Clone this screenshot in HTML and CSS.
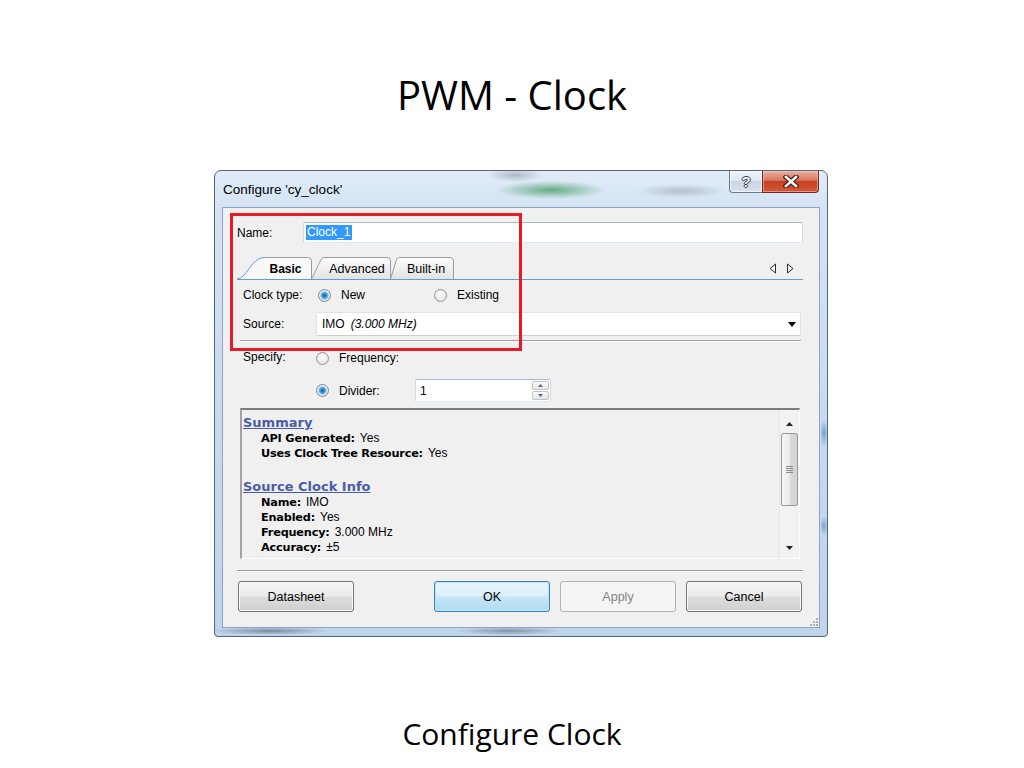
FILE: index.html
```html
<!DOCTYPE html>
<html>
<head>
<meta charset="utf-8">
<title>PWM - Clock</title>
<link rel="stylesheet" href="styles.css">
</head>
<body>
<div class="slide">
  <h1 class="title">PWM - Clock</h1>
  <div class="dialog">
    <div class="titlebar">
      <span class="wtitle">Configure 'cy_clock'</span>
      <div class="capbtns">
        <div class="capbtn help"><span class="qmark">?</span></div>
        <div class="capbtn close">
          <svg width="16" height="13" viewBox="0 0 16 13"><path d="M3 2 L13 11 M13 2 L3 11" stroke="#4a1d15" stroke-width="5" stroke-linecap="square"/><path d="M3 2 L13 11 M13 2 L3 11" stroke="#ffffff" stroke-width="2.6" stroke-linecap="square"/></svg>
        </div>
      </div>
    </div>
    <div class="client">
      <div class="name-row">
        <span class="name-lbl">Name:</span>
        <div class="textbox name-box"><span class="sel">Clock_1</span></div>
      </div>
      <div class="tabstrip">
        <div class="tabs">
          <span class="tab t1">Basic</span>
          <span class="tab t2">Advanced</span>
          <span class="tab t3">Built-in</span>
        </div>
        <svg class="navarrows" width="25" height="11" viewBox="0 0 25 11"><path d="M6.5 1 L1 5.5 L6.5 10 Z" fill="#f4f4f4" stroke="#2b2b2b"/><path d="M18.5 1 L24 5.5 L18.5 10 Z" fill="#f4f4f4" stroke="#2b2b2b"/></svg>
      </div>
      <div class="form">
        <div class="frow r-type">
          <span class="flbl">Clock type:</span>
          <span class="radio on r-new"></span><span class="rtxt w-new">New</span>
          <span class="radio"></span><span class="rtxt">Existing</span>
        </div>
        <div class="frow r-src">
          <span class="flbl">Source:</span>
          <div class="combo">
            <span class="c-main">IMO</span><span class="c-sub">(3.000 MHz)</span>
            <svg class="c-arrow" width="8" height="5" viewBox="0 0 8 5"><path d="M0 0 L8 0 L4 5 Z" fill="#000"/></svg>
          </div>
        </div>
      </div>
      <div class="sep sep1"></div>
      <div class="form">
        <div class="frow r-spec">
          <span class="flbl spec-lbl">Specify:</span>
          <span class="radio"></span><span class="rtxt">Frequency:</span>
        </div>
        <div class="frow r-div">
          <span class="flbl"></span>
          <span class="radio on"></span><span class="rtxt w-div">Divider:</span>
          <div class="textbox spinbox">
            <span class="spin-val">1</span>
            <div class="spin">
              <div class="spin-btn"><svg width="5" height="3" viewBox="0 0 5 3"><path d="M0 3 L2.5 0 L5 3 Z" fill="#4a6a8a"/></svg></div>
              <div class="spin-btn"><svg width="5" height="3" viewBox="0 0 5 3"><path d="M0 0 L2.5 3 L5 0 Z" fill="#4a6a8a"/></svg></div>
            </div>
          </div>
        </div>
      </div>
      <div class="infobox">
        <div class="info">
          <div class="ih">Summary</div>
          <div class="ii"><b>API Generated:</b>Yes</div>
          <div class="ii"><b>Uses Clock Tree Resource:</b>Yes</div>
          <div class="ispace"></div>
          <div class="ih">Source Clock Info</div>
          <div class="ii"><b>Name:</b>IMO</div>
          <div class="ii"><b>Enabled:</b>Yes</div>
          <div class="ii"><b>Frequency:</b>3.000 MHz</div>
          <div class="ii"><b>Accuracy:</b>±5</div>
        </div>
        <div class="sbar">
          <svg class="sb-up" width="7" height="4" viewBox="0 0 7 4"><path d="M0 4 L3.5 0 L7 4 Z" fill="#222"/></svg>
          <div class="thumb">
            <svg width="7" height="7" viewBox="0 0 7 7"><path d="M0 0.5 H7 M0 2.5 H7 M0 4.5 H7 M0 6.5 H7" stroke="#8a8a8a" stroke-width="1"/></svg>
          </div>
          <svg class="sb-down" width="7" height="4" viewBox="0 0 7 4"><path d="M0 0 L7 0 L3.5 4 Z" fill="#222"/></svg>
        </div>
      </div>
      <div class="sep sep2"></div>
      <div class="buttons">
        <div class="btn">Datasheet</div>
        <div class="btn ok">OK</div>
        <div class="btn disabled">Apply</div>
        <div class="btn">Cancel</div>
      </div>
      <svg class="grip" width="10" height="10" viewBox="0 0 10 10"><g fill="#b0b0b0"><rect x="8" y="2" width="2" height="2"/><rect x="5" y="5" width="2" height="2"/><rect x="8" y="5" width="2" height="2"/><rect x="2" y="8" width="2" height="2"/><rect x="5" y="8" width="2" height="2"/><rect x="8" y="8" width="2" height="2"/></g></svg>
    </div>
    <div class="redbox"></div>
  </div>
  <p class="caption">Configure Clock</p>
</div>
</body>
</html>
```
FILE: styles.css
```css
html, body {
  margin: 0;
  padding: 0;
  background: #ffffff;
}

.slide {
  width: 1024px;
  height: 768px;
  display: flex;
  flex-direction: column;
  background: #ffffff;
  overflow: hidden;
}

.title {
  margin: 0;
  height: 170px;
  box-sizing: border-box;
  padding-top: 70px;
  text-align: center;
  font: 400 40px/50px "Open Sans", "Liberation Sans", sans-serif;
  color: #000;
}

.caption {
  margin: 77px 0 0 0;
  text-align: center;
  font: 400 30px/40px "Open Sans", "Liberation Sans", sans-serif;
  color: #000;
}

/* ---------- window ---------- */
.dialog {
  position: relative;
  margin-left: 214px;
  width: 614px;
  height: 467px;
  box-sizing: border-box;
  border: 1px solid #55667a;
  border-radius: 7px 7px 4px 4px;
  padding: 0 7px 8px 7px;
  display: flex;
  flex-direction: column;
  font-family: "Liberation Sans", Arial, sans-serif;
  background:
    radial-gradient(ellipse 55px 9px at 336px 19px, rgba(60, 150, 95, 0.75), rgba(60, 150, 95, 0)),
    radial-gradient(ellipse 28px 7px at 300px 4px, rgba(80, 95, 110, 0.35), rgba(80, 95, 110, 0)),
    radial-gradient(ellipse 45px 7px at 466px 20px, rgba(105, 115, 130, 0.35), rgba(105, 115, 130, 0)),
    radial-gradient(ellipse 58px 4px at 55px 460px, rgba(55, 65, 85, 0.5), rgba(55, 65, 85, 0)),
    radial-gradient(ellipse 52px 4px at 294px 460px, rgba(55, 65, 85, 0.45), rgba(55, 65, 85, 0)),
    radial-gradient(ellipse 4px 14px at 609px 262px, rgba(70, 130, 200, 0.7), rgba(70, 130, 200, 0)),
    radial-gradient(ellipse 4px 10px at 609px 355px, rgba(70, 130, 200, 0.6), rgba(70, 130, 200, 0)),
    linear-gradient(180deg, #e1ecf7 0%, #d4e3f3 8%, #c6d9ee 60%, #bed4eb 100%);
}

.titlebar {
  height: 36px;
  display: flex;
  align-items: center;
}

.wtitle {
  padding-left: 1px;
  font-size: 13.5px;
  color: #000;
}

.capbtns {
  margin-left: auto;
  margin-right: 1px;
  align-self: flex-start;
  display: flex;
}

.capbtn {
  height: 22px;
  box-sizing: border-box;
  display: flex;
  align-items: center;
  justify-content: center;
}

.help {
  width: 33px;
  border: 1px solid #6a7b90;
  border-top: none;
  border-right: none;
  border-radius: 0 0 0 4px;
  background: linear-gradient(180deg, #eef3f9 0%, #dfe8f2 45%, #c9d6e5 50%, #d8e2ee 100%);
  box-shadow: inset 0 0 0 1px rgba(255, 255, 255, 0.6);
}

.qmark {
  font: bold 15px/1 "Liberation Sans", Arial, sans-serif;
  color: #f2f5f8;
  text-shadow: 0 0 1px #2d3b4c, 1px 0 0 #3b4a5c, -1px 0 0 #3b4a5c, 0 1px 0 #3b4a5c, 0 -1px 0 #3b4a5c;
}

.close {
  width: 57px;
  border: 1px solid #6b2a1d;
  border-top: none;
  border-radius: 0 0 4px 0;
  background: linear-gradient(180deg, #eab1a2 0%, #d8735c 45%, #c4411f 50%, #d2583a 100%);
  box-shadow: inset 0 0 0 1px rgba(255, 210, 200, 0.5);
}

/* ---------- client ---------- */
.client {
  position: relative;
  flex: 1;
  box-sizing: border-box;
  border: 1px solid #8fa5bf;
  background: #f0f0f0;
  padding: 14px 16px 0 14px;
  display: flex;
  flex-direction: column;
  font-size: 12px;
  color: #000;
}

.name-row {
  height: 21px;
  display: flex;
  align-items: center;
}

.name-lbl {
  width: 66px;
}

.textbox {
  box-sizing: border-box;
  background: #fff;
  border: 1px solid;
  border-color: #a7bad0 #cfdae6 #dfe7ef #cfdae6;
  border-radius: 2px;
  display: flex;
  align-items: center;
}

.name-box {
  flex: 1;
  height: 21px;
  padding-left: 2px;
}

.sel {
  background: #3399ff;
  color: #fff;
  line-height: 15px;
  padding: 0 2px 0 1px;
}

/* tabs */
.tabstrip {
  margin-top: 14px;
  height: 22px;
  border-bottom: 1px solid #5c9ddc;
  display: flex;
  align-items: center;
  background: url("data:image/svg+xml,%3Csvg xmlns='http://www.w3.org/2000/svg' width='220' height='22'%3E%3Cdefs%3E%3ClinearGradient id='g' x1='0' y1='0' x2='0' y2='1'%3E%3Cstop offset='0' stop-color='%23fdfdfd'/%3E%3Cstop offset='1' stop-color='%23e3e3e3'/%3E%3C/linearGradient%3E%3C/defs%3E%3Cpath d='M153.5 22 L159.5 2.5 Q160.3 0.5 162.5 0.5 L213 0.5 Q216.5 0.5 216.5 4 L216.5 22' fill='url(%23g)' stroke='%239c9c9c'/%3E%3Cpath d='M74.5 22 L84 2.5 Q85 0.5 87 0.5 L150 0.5 Q153.5 0.5 153.5 4 L153.5 22' fill='url(%23g)' stroke='%239c9c9c'/%3E%3Cpath d='M0 22 C10 22 14 0.5 27 0.5 L71 0.5 Q74.5 0.5 74.5 4 L74.5 22 Z' fill='%23f8f8f8' stroke='none'/%3E%3Cpath d='M27 0.5 L71 0.5 Q74.5 0.5 74.5 4 L74.5 22' fill='none' stroke='%239c9c9c'/%3E%3Cpath d='M0 22 C10 22 14 0.5 27 0.5' fill='none' stroke='%235c9ddc'/%3E%3C/svg%3E") no-repeat 0 0;
}

.tabs {
  height: 22px;
  display: flex;
  align-items: center;
  padding-top: 1px;
  box-sizing: border-box;
}

.tab {
  text-align: center;
  font-size: 12.5px;
}

.t1 {
  margin-left: 24px;
  width: 49px;
  font-weight: bold;
  font-size: 12px;
}

.t2 {
  margin-left: 13px;
  width: 68px;
}

.t3 {
  margin-left: 7px;
  width: 56px;
}

.navarrows {
  margin-left: auto;
  margin-right: 9px;
  margin-top: 1px;
}

/* form rows */
.form {
  margin-left: 6px;
  margin-right: 2px;
  display: flex;
  flex-direction: column;
}

.frow {
  display: flex;
  align-items: center;
}

.flbl {
  width: 73px;
  flex: none;
}

.r-type {
  margin-top: 5px;
  height: 20px;
}

.r-src {
  margin-top: 7px;
  height: 24px;
}

.r-spec {
  margin-top: 6px;
  height: 20px;
}

.spec-lbl {
  margin-top: -3px;
}

.r-div {
  margin-top: 11px;
  height: 23px;
}

.radio {
  flex: none;
  width: 13px;
  height: 13px;
  box-sizing: border-box;
  border-radius: 50%;
  border: 1px solid #959595;
  background: radial-gradient(circle at 50% 40%, #fdfdfd 0%, #ececec 55%, #d8d8d8 100%);
}

.radio.on {
  border-color: #7a8a99;
  background:
    radial-gradient(circle at 50% 50%, #1d5f93 0, #2f85c3 1.6px, #56aee6 3px, #a9d6f2 4px, rgba(255,255,255,0) 4.6px),
    radial-gradient(circle at 50% 40%, #fdfdfd 0%, #ececec 55%, #d8d8d8 100%);
}

.r-new {
  margin-left: 2px;
}

.rtxt {
  margin-left: 10px;
}

.w-new {
  width: 93px;
}

.w-div {
  width: 76px;
}

.combo {
  flex: 1;
  height: 24px;
  box-sizing: border-box;
  background: #fff;
  border: 1px solid #e2e2e2;
  border-bottom-color: #cfcfcf;
  border-radius: 2px;
  display: flex;
  align-items: center;
  padding-left: 5px;
  padding-right: 4px;
}

.c-sub {
  margin-left: 6px;
  font-style: italic;
}

.c-arrow {
  margin-left: auto;
}

.sep {
  height: 0;
  border-top: 1px solid #a0a0a0;
  border-bottom: 1px solid #ffffff;
}

.sep1 {
  margin: 4px 2px 0 3px;
}

.sep2 {
  margin-top: 11px;
}

.spinbox {
  width: 136px;
  height: 23px;
  padding-left: 4px;
  padding-right: 1px;
}

.spin-val {
  flex: 1;
}

.spin {
  width: 17px;
  height: 19px;
  display: flex;
  flex-direction: column;
  gap: 1px;
}

.spin-btn {
  flex: 1;
  box-sizing: border-box;
  border: 1px solid #c3c3c3;
  border-radius: 2px;
  background: linear-gradient(180deg, #fafafa, #e6e6e6);
  display: flex;
  align-items: center;
  justify-content: center;
}

/* info box */
.infobox {
  margin: 6px 3px 0 3px;
  height: 151px;
  box-sizing: border-box;
  border-style: solid;
  border-width: 2px 1px 1px 2px;
  border-color: #7b7b7b #fdfdfd #fdfdfd #a2a2a2;
  background: #f0f0f0;
  display: flex;
}

.info {
  flex: 1;
  overflow: hidden;
  padding: 5px 0 0 1px;
}

.ih {
  font: bold 13px/16px "DejaVu Sans", Verdana, sans-serif;
  color: #4b5ca6;
  text-decoration: underline;
}

.ii {
  padding-left: 18px;
  font: 12px/15px "Liberation Sans", Arial, sans-serif;
}

.ii b {
  margin-right: 5px;
  font: bold 11.3px/15px "DejaVu Sans", Verdana, sans-serif;
  letter-spacing: -0.2px;
}

.ispace {
  height: 18px;
}

.sbar {
  width: 19px;
  flex: none;
  display: flex;
  flex-direction: column;
  align-items: center;
  background: #f2f2f2;
  border-left: 1px solid #e6e6e6;
}

.sb-up {
  margin-top: 12px;
}

.thumb {
  margin-top: 7px;
  width: 17px;
  height: 73px;
  box-sizing: border-box;
  border: 1px solid #989898;
  border-radius: 2px;
  background: linear-gradient(90deg, #f6f6f6 0%, #e9e9e9 50%, #d9d9d9 51%, #d3d3d3 100%);
  display: flex;
  align-items: center;
  justify-content: center;
}

.sb-down {
  margin-top: auto;
  margin-bottom: 8px;
}

/* buttons */
.buttons {
  margin-top: 9px;
  height: 31px;
  display: flex;
  gap: 10px;
  padding: 0 1px;
}

.btn {
  width: 116px;
  height: 31px;
  box-sizing: border-box;
  border: 1px solid #707070;
  border-radius: 3px;
  background: linear-gradient(180deg, #f3f3f3 0%, #ebebeb 48%, #dddddd 52%, #cfcfcf 100%);
  box-shadow: inset 0 0 0 1px #fbfbfb;
  display: flex;
  align-items: center;
  justify-content: center;
  font-size: 12.5px;
  color: #000;
}

.btn.ok {
  margin-left: auto;
  border-color: #3c7fb1;
  background: linear-gradient(180deg, #e8f5fc 0%, #dbf0fb 48%, #c4e6f7 52%, #b2dbf1 100%);
  box-shadow: inset 0 0 0 1px #bfe4f7;
}

.btn.disabled {
  border-color: #adb2b5;
  background: #f4f4f4;
  box-shadow: none;
  color: #838383;
}

.grip {
  position: absolute;
  right: 1px;
  bottom: 1px;
}

.redbox {
  position: absolute;
  left: 15px;
  top: 42px;
  width: 292px;
  height: 138px;
  box-sizing: border-box;
  border: 3px solid #e51c23;
}
```
